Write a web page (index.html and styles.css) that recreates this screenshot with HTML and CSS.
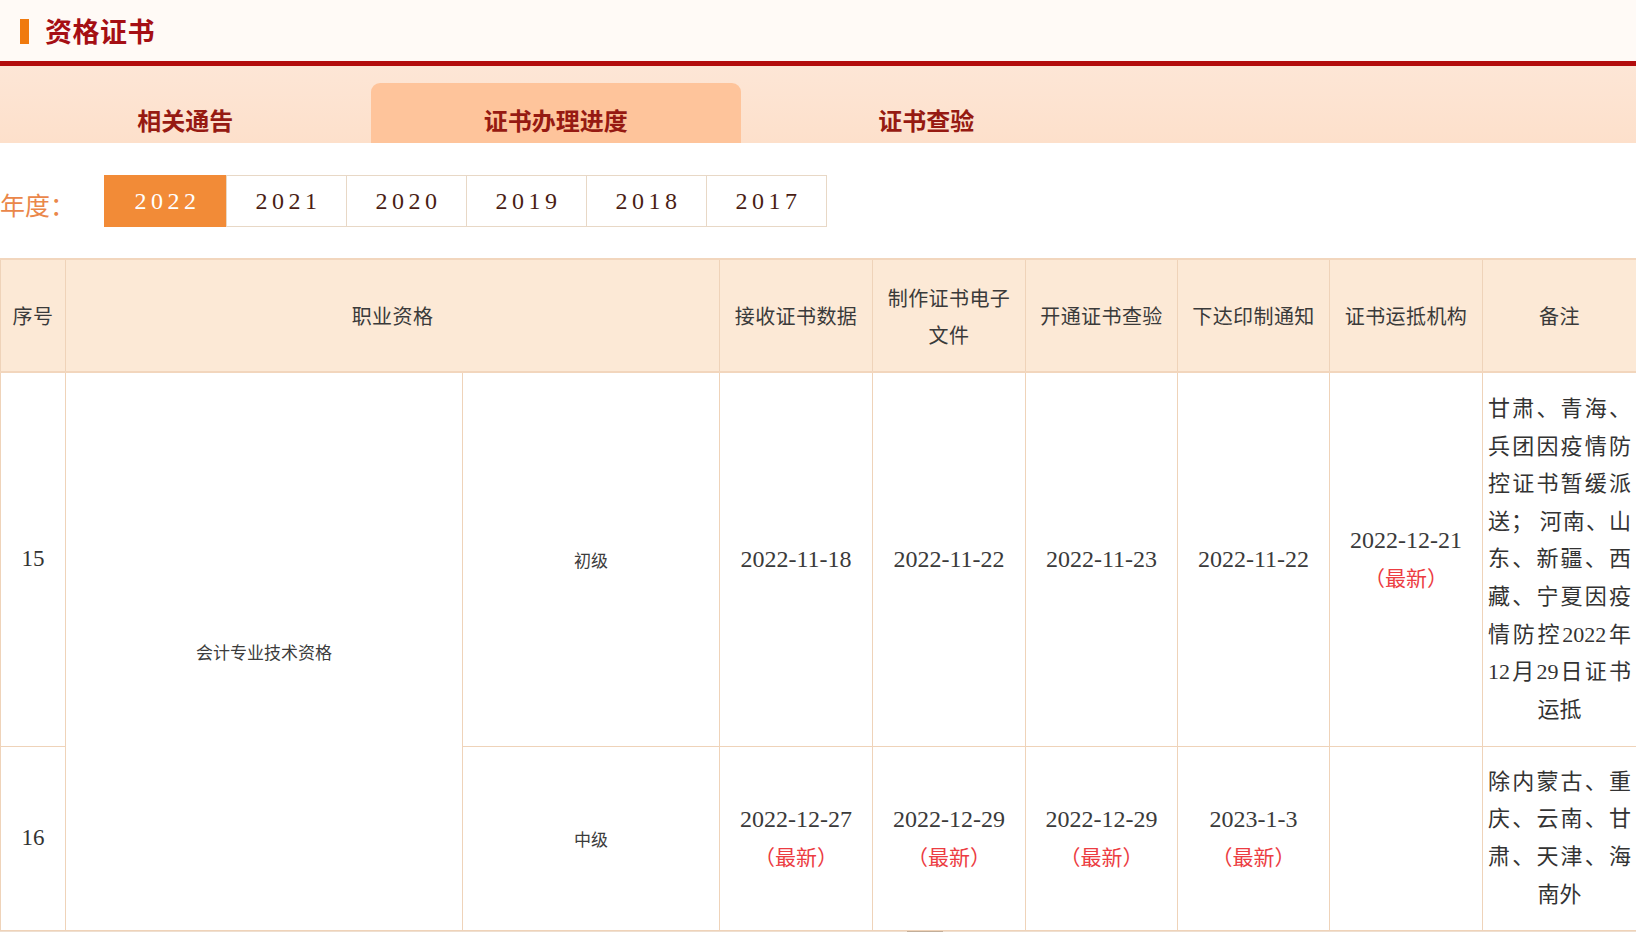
FILE: index.html
```html
<!DOCTYPE html>
<html lang="zh-CN">
<head>
<meta charset="utf-8">
<title>资格证书</title>
<link rel="stylesheet" href="styles.css">
</head>
<body>
<div class="page">
  <div class="title-bar">
    <span class="title-mark"></span>
    <h1 class="title">资格证书</h1>
  </div>
  <div class="tabs">
    <div class="tab">相关通告</div>
    <div class="tab active">证书办理进度</div>
    <div class="tab">证书查验</div>
  </div>
  <div class="years">
    <span class="years-label">年度：</span>
    <div class="year-list">
      <span class="year active">2022</span>
      <span class="year">2021</span>
      <span class="year">2020</span>
      <span class="year">2019</span>
      <span class="year">2018</span>
      <span class="year">2017</span>
    </div>
  </div>
  <table class="progress">
    <colgroup>
      <col class="c-no">
      <col class="c-qual">
      <col class="c-level">
      <col class="c-date">
      <col class="c-date">
      <col class="c-date2">
      <col class="c-date2">
      <col class="c-date">
      <col class="c-note">
    </colgroup>
    <thead>
      <tr class="head-row">
        <th>序号</th>
        <th colspan="2">职业资格</th>
        <th>接收证书数据</th>
        <th>制作证书电子文件</th>
        <th>开通证书查验</th>
        <th>下达印制通知</th>
        <th>证书运抵机构</th>
        <th>备注</th>
      </tr>
    </thead>
    <tbody>
      <tr class="row-a">
        <td class="num">15</td>
        <td class="qual" rowspan="2">会计专业技术资格</td>
        <td class="level">初级</td>
        <td class="date">2022-11-18</td>
        <td class="date">2022-11-22</td>
        <td class="date">2022-11-23</td>
        <td class="date">2022-11-22</td>
        <td class="date">2022-12-21<br><span class="new">（最新）</span></td>
        <td class="note">甘肃、青海、兵团因疫情防控证书暂缓派送； 河南、山东、新疆、西藏、宁夏因疫情防控2022年12月29日证书运抵</td>
      </tr>
      <tr class="row-b">
        <td class="num">16</td>
        <td class="level">中级</td>
        <td class="date">2022-12-27<br><span class="new">（最新）</span></td>
        <td class="date">2022-12-29<br><span class="new">（最新）</span></td>
        <td class="date">2022-12-29<br><span class="new">（最新）</span></td>
        <td class="date">2023-1-3<br><span class="new">（最新）</span></td>
        <td class="date"></td>
        <td class="note">除内蒙古、重庆、云南、甘肃、天津、海南外</td>
      </tr>
    </tbody>
  </table>
  <div class="footer-bar"><span class="footer-thumb"></span></div>
</div>
</body>
</html>
```
FILE: styles.css
```css
html, body {
  margin: 0;
  padding: 0;
  background: #ffffff;
}

body {
  font-family: "Liberation Serif", "Noto Sans CJK SC", serif;
  color: #333333;
  overflow: hidden;
}

.page {
  width: 1636px;
  height: 932px;
  overflow: hidden;
}

/* Title bar */
.title-bar {
  height: 61px;
  background: #fffaf6;
  border-bottom: 5px solid #b30c0c;
  display: flex;
  align-items: center;
  padding-left: 20px;
  box-sizing: content-box;
}

.title-mark {
  width: 9px;
  height: 25px;
  background: #f07a0e;
  margin-top: 2px;
}

.title {
  margin: 0 0 0 16px;
  font-family: "Noto Sans CJK SC", sans-serif;
  font-weight: 700;
  font-size: 27px;
  line-height: 30px;
  color: #a50f14;
  letter-spacing: 0.5px;
}

/* Tabs */
.tabs {
  height: 60px;
  padding-top: 17px;
  background: linear-gradient(#fde6d6, #fde0cb);
  display: flex;
}

.tab {
  width: 370.5px;
  height: 60px;
  box-sizing: border-box;
  padding-top: 22px;
  text-align: center;
  font-family: "Noto Sans CJK SC", sans-serif;
  font-weight: 700;
  font-size: 24px;
  line-height: 30px;
  color: #961a12;
}

.tab.active {
  background: #fec49b;
  border-radius: 9px 9px 0 0;
}

/* Years */
.years {
  margin-top: 32px;
  height: 52px;
  display: flex;
  align-items: center;
}

.years-label {
  width: 104px;
  font-family: "Noto Sans CJK SC", sans-serif;
  font-size: 25px;
  color: #ea874a;
  margin-top: 6px;
}

.year-list {
  display: flex;
  height: 52px;
}

.year {
  width: 121px;
  height: 52px;
  box-sizing: border-box;
  border: 1px solid #e8d8c6;
  margin-left: -1px;
  display: flex;
  align-items: center;
  justify-content: center;
  font-family: "Liberation Serif", serif;
  font-size: 24px;
  letter-spacing: 4.5px;
  padding-left: 4px;
  color: #4a1d14;
  background: #ffffff;
}

.year:first-child {
  margin-left: 0;
  width: 123px;
}

.year.active {
  background: #f28b37;
  border-color: #f28b37;
  color: #ffffff;
}

/* Table */
.progress {
  margin-top: 31px;
  width: 1636px;
  table-layout: fixed;
  border-collapse: collapse;
}

.c-no { width: 65px; }
.c-qual { width: 397px; }
.c-level { width: 257px; }
.c-date { width: 153px; }
.c-date2 { width: 152px; }
.c-note { width: 154px; }

.progress th,
.progress td {
  border: 1px solid #efd3b9;
  text-align: center;
  vertical-align: middle;
  padding: 0 8px;
  box-sizing: border-box;
}

.progress th {
  background: #fce9d6;
  font-family: "Noto Sans CJK SC", sans-serif;
  font-weight: 400;
  font-size: 20px;
  line-height: 37px;
  letter-spacing: 0.4px;
  color: #3a3a3a;
  border-top: 2px solid #f2d6bd;
  border-bottom: 2px solid #f2d6bd;
}

.head-row { height: 113px; }
.row-a { height: 374px; }
.row-b { height: 184px; }

.num {
  font-family: "Liberation Serif", serif;
  font-size: 23px;
  color: #333333;
}

.qual,
.level {
  font-family: "Noto Sans CJK SC", sans-serif;
  font-size: 17px;
  color: #3c3c3c;
}

.date {
  font-family: "Liberation Serif", "Noto Sans CJK SC", serif;
  font-size: 24px;
  line-height: 37px;
  color: #3a3a3a;
}

.new {
  font-family: "Noto Sans CJK SC", sans-serif;
  font-size: 21px;
  color: #ec3c42;
  font-feature-settings: "halt";
}

.progress td.note {
  padding: 0 5px;
  font-family: "Liberation Serif", "Noto Sans CJK SC", serif;
  font-size: 22px;
  line-height: 37.6px;
  text-align: justify;
  text-align-last: center;
  color: #333333;
}

.footer-bar {
  height: 3px;
  background: #efdfd0;
  position: relative;
}

.footer-thumb {
  position: absolute;
  left: 907px;
  top: 0;
  width: 36px;
  height: 3px;
  background: #c2ae9a;
}
```
